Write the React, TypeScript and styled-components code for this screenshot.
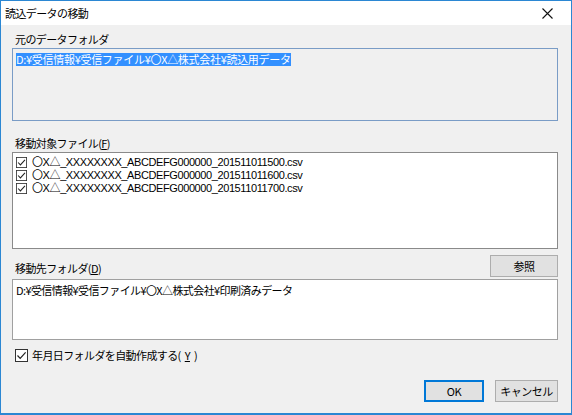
import styled, { createGlobalStyle } from "styled-components";

const GlobalStyle = createGlobalStyle`
  html, body {
    margin: 0;
    padding: 0;
    background: #ffffff;
  }
  body {
    font-family: "Noto Sans CJK JP", "Noto Sans", sans-serif;
    font-size: 11px;
    color: #000000;
  }
`;

const Window = styled.div`
  width: 572px;
  height: 415px;
  box-sizing: border-box;
  border: 1px solid #2b87d3;
  border-bottom-width: 2px;
  background: #f0f0f0;
  display: flex;
  flex-direction: column;
`;

const TitleBar = styled.div`
  height: 24px;
  background: #ffffff;
  display: flex;
  align-items: center;
  justify-content: space-between;
  padding: 0 18px 0 4px;
`;

const Title = styled.span`
  font-size: 11px;
  letter-spacing: -0.6px;
  line-height: 14px;
`;

const CloseIcon = () => (
  <svg width="11" height="11" viewBox="0 0 11 11">
    <path d="M0.5 0.5 L10.5 10.5 M10.5 0.5 L0.5 10.5" stroke="#111" strokeWidth="1.1" />
  </svg>
);

const Body = styled.div`
  flex: 1;
  display: flex;
  flex-direction: column;
  padding: 7px 13px 0 11px;
`;

const Label = styled.div<{ gap?: number }>`
  font-size: 11px;
  letter-spacing: -0.6px;
  line-height: 14px;
  margin-top: ${(p) => p.gap ?? 0}px;
  margin-left: 3px;
  margin-bottom: 2px;
`;

const Field = styled.div<{ height: number; readOnly?: boolean; tone?: string }>`
  height: ${(p) => p.height}px;
  box-sizing: border-box;
  border: 1px solid ${(p) => p.tone ?? "#a0a0a0"};
  background: ${(p) => (p.readOnly ? "#f0f0f0" : "#ffffff")};
  padding: 2px 3px;
  overflow: hidden;
`;

const Selected = styled.span`
  background: #3390ff;
  color: #ffffff;
  font-size: 11px;
  letter-spacing: -0.3px;
  line-height: 13px;
  display: inline-block;
`;

const PathText = styled.div`
  font-size: 11px;
  letter-spacing: -0.6px;
  line-height: 14px;
  padding-top: 1px;
`;

const FileList = styled.div`
  display: flex;
  flex-direction: column;
  padding-top: 1px;
`;

const FileRow = styled.div`
  display: flex;
  align-items: center;
  height: 13px;
  gap: 5px;
  font-family: "Liberation Sans", "Noto Sans CJK JP", sans-serif;
  font-size: 11px;
  letter-spacing: -0.4px;
  line-height: 13px;
`;

const Check = ({ size = 11 }: { size?: number }) => (
  <svg width={size} height={size} viewBox="0 0 13 13">
    <rect x="0.5" y="0.5" width="12" height="12" fill="#ffffff" stroke="#333" />
    <path d="M2.5 6.5 L5.2 9.4 L10.6 3.4" fill="none" stroke="#222" strokeWidth="1.2" />
  </svg>
);

const DestHeader = styled.div`
  display: flex;
  align-items: flex-end;
  justify-content: space-between;
  margin-top: 6px;
  margin-bottom: 2px;
`;

const Button = styled.button<{ primary?: boolean; w: number }>`
  width: ${(p) => p.w}px;
  height: 22px;
  box-sizing: border-box;
  background: #e1e1e1;
  border: 1px solid ${(p) => (p.primary ? "#0078d7" : "#adadad")};
  box-shadow: ${(p) => (p.primary ? "inset 0 0 0 1px #0078d7" : "none")};
  font-family: inherit;
  font-size: 11px;
  letter-spacing: -0.5px;
  color: #000;
  padding: 0;
`;

const CheckRow = styled.label`
  display: flex;
  align-items: center;
  gap: 4px;
  margin: 8px 0 0 3px;
  font-size: 11px;
  letter-spacing: -0.6px;
  line-height: 14px;
`;

const Footer = styled.div`
  display: flex;
  justify-content: flex-end;
  gap: 11px;
  margin-top: 18px;
`;

const files = [
  "〇X△_XXXXXXXX_ABCDEFG000000_201511011500.csv",
  "〇X△_XXXXXXXX_ABCDEFG000000_201511011600.csv",
  "〇X△_XXXXXXXX_ABCDEFG000000_201511011700.csv",
];

export default function App() {
  return (
    <>
      <GlobalStyle />
      <Window>
        <TitleBar>
          <Title>読込データの移動</Title>
          <CloseIcon />
        </TitleBar>
        <Body>
          <Label>元のデータフォルダ</Label>
          <Field height={73} readOnly tone="#7a9cc6">
            <Selected>D:¥受信情報¥受信ファイル¥〇X△株式会社¥読込用データ</Selected>
          </Field>
          <Label gap={15}>
            移動対象ファイル(<u>F</u>)
          </Label>
          <Field height={97} tone="#8a8a8a">
            <FileList>
              {files.map((f) => (
                <FileRow key={f}>
                  <Check />
                  <span>{f}</span>
                </FileRow>
              ))}
            </FileList>
          </Field>
          <DestHeader>
            <Label>
              移動先フォルダ(<u>D</u>)
            </Label>
            <Button w={68}>参照</Button>
          </DestHeader>
          <Field height={61}>
            <PathText>D:¥受信情報¥受信ファイル¥〇X△株式会社¥印刷済みデータ</PathText>
          </Field>
          <CheckRow>
            <Check size={13} />
            年月日フォルダを自動作成する(<u>Y</u>)
          </CheckRow>
          <Footer>
            <Button primary w={60}>OK</Button>
            <Button w={63}>キャンセル</Button>
          </Footer>
        </Body>
      </Window>
    </>
  );
}
